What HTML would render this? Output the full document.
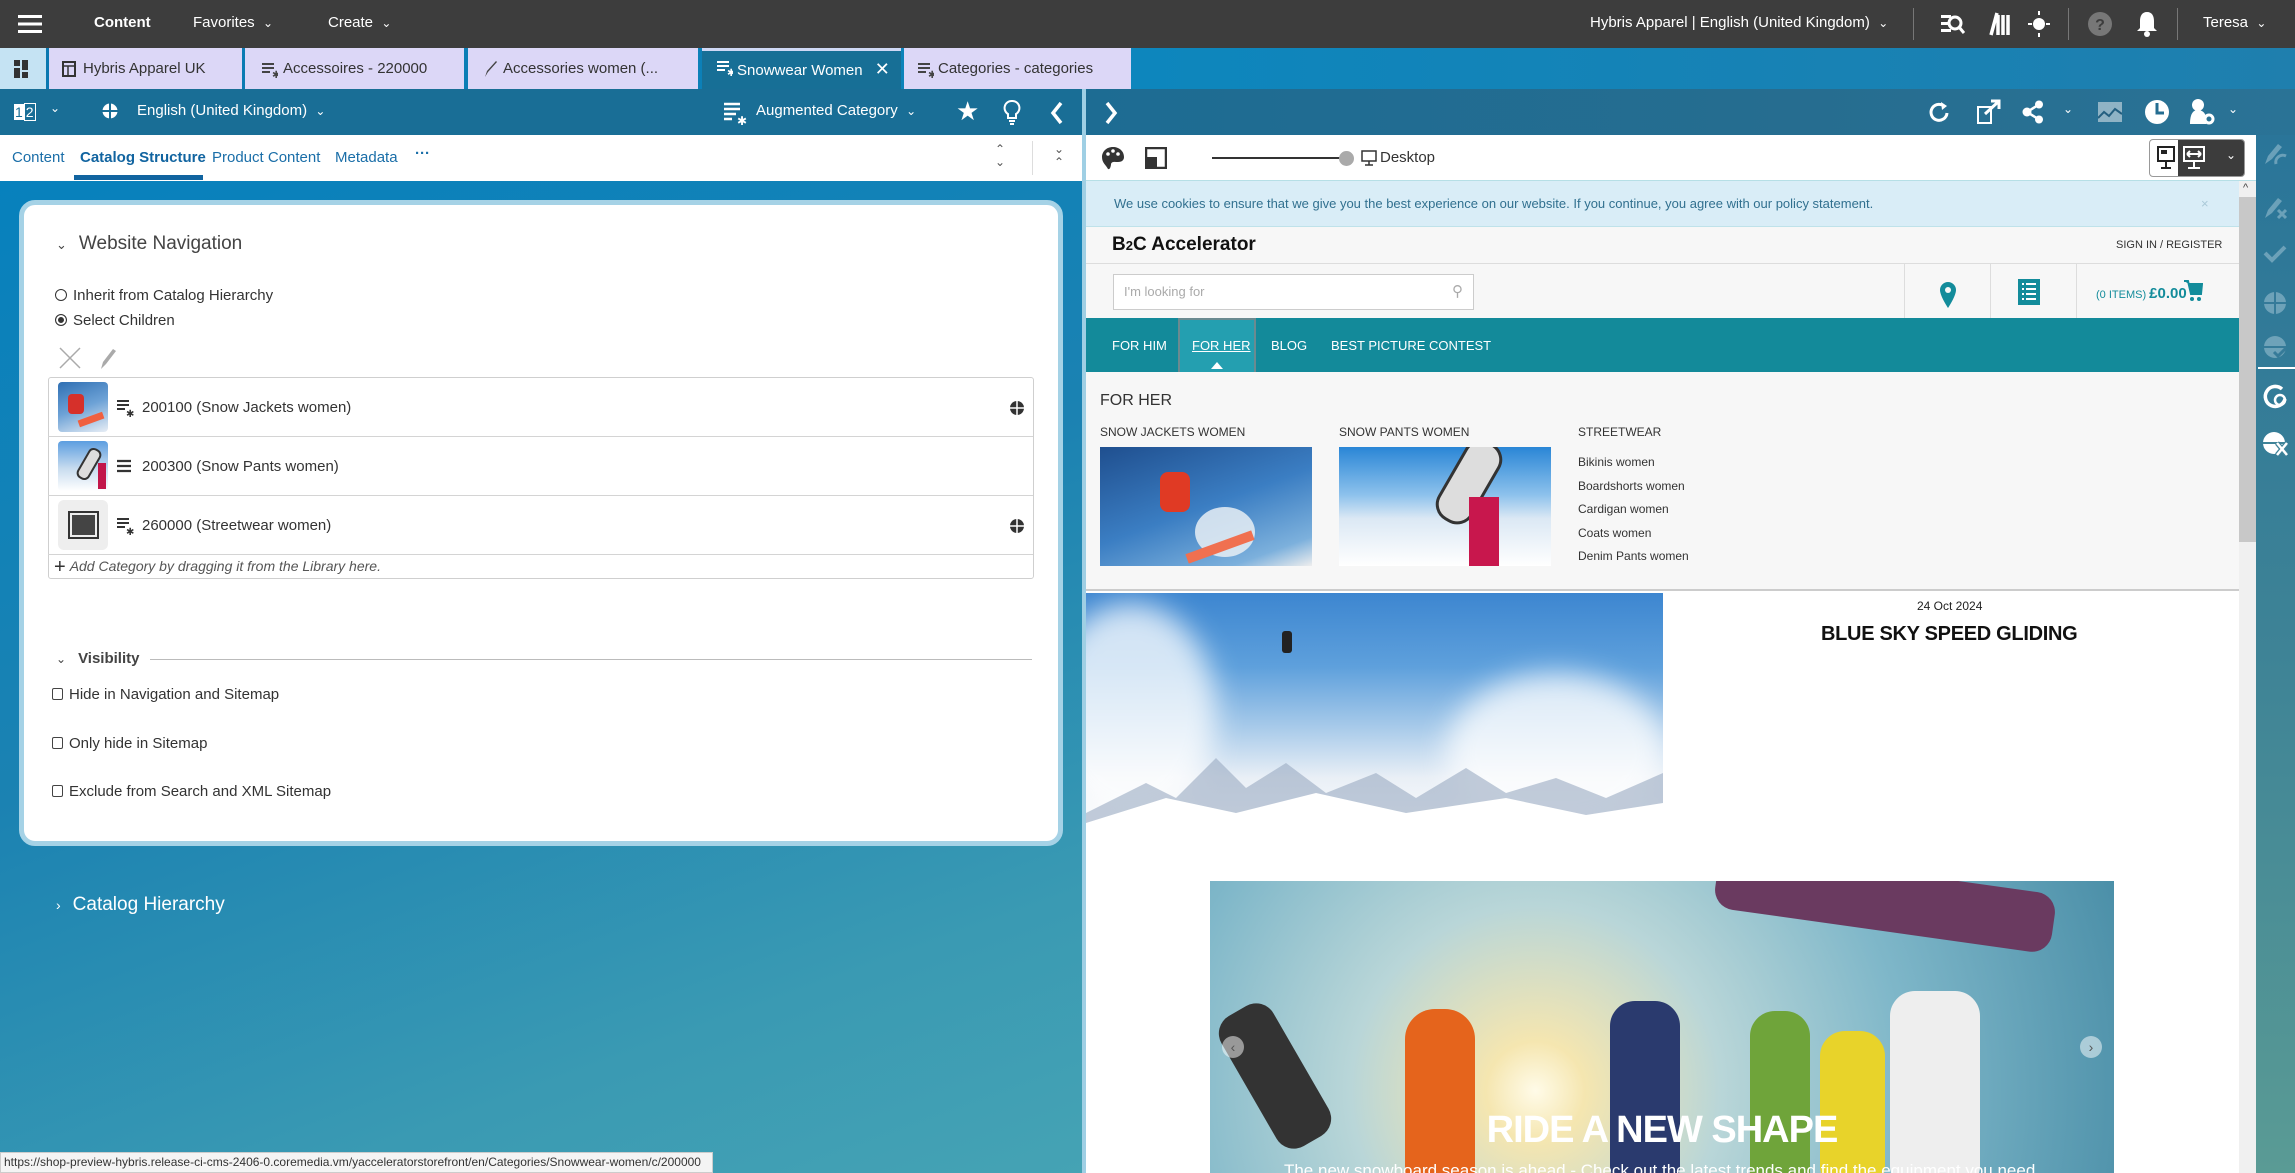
<!DOCTYPE html>
<html><head><meta charset="utf-8">
<style>
*{box-sizing:border-box;margin:0;padding:0}
body{width:2295px;height:1173px;overflow:hidden;position:relative;font-family:"Liberation Sans",sans-serif;background:#1a7fb0}
.a{position:absolute}
.w{color:#fff}
.top{left:0;top:0;width:2295px;height:48px;background:#3d3d3d;color:#fff;font-size:15px}
.tabs{left:0;top:48px;width:2295px;height:41px;background:linear-gradient(90deg,#0a78b0,#0d86bd 50%,#1f7fae)}
.tab{top:48px;height:41px;background:#dcd7f7;color:#333;font-size:15px;line-height:41px;padding-left:20px;white-space:nowrap}
.lt{left:0;top:89px;width:1082px;height:46px;background:#196e96;color:#fff;font-size:15px}
.rt{left:1086px;top:89px;width:1209px;height:46px;background:linear-gradient(90deg,#1d6c93,#266d90 60%,#2a7396)}
.ltab{left:0;top:135px;width:1082px;height:46px;background:#fff;font-size:15px;color:#1a6ea8}
.lbody{left:0;top:181px;width:1082px;height:992px;background:linear-gradient(160deg,#0781bd 0%,#1b82b2 45%,#3a9ab3 80%,#45a3b4 100%)}
.card{left:19px;top:200px;width:1044px;height:646px;background:#fff;border:5px solid #a5d2e6;border-radius:16px;color:#333;font-size:15px}
.row{left:48px;width:985px;height:59px;border-bottom:1px solid #d4d4d4;font-size:15px;color:#333}
.chk{display:inline-block;width:11px;height:12px;border:1px solid #444;border-radius:2px;vertical-align:-1px;margin-right:6px}
.pv{left:1086px;top:181px;width:1153px;height:992px;background:#fff;overflow:hidden;font-family:"Liberation Sans",sans-serif}
.side{left:2256px;top:135px;width:39px;height:1038px;background:linear-gradient(180deg,#2a7599,#3e8396 50%,#5a9b95)}
</style></head><body>

<div class="a top">
  <svg class="a" style="left:18px;top:14px" width="26" height="20"><rect y="1" width="24" height="3" fill="#fff"/><rect y="8.5" width="24" height="3" fill="#fff"/><rect y="16" width="24" height="3" fill="#fff"/></svg>
  <div class="a" style="left:94px;top:14px;font-weight:bold">Content</div>
  <div class="a" style="left:193px;top:14px">Favorites &nbsp;<span style="font-size:12px">&#8964;</span></div>
  <div class="a" style="left:328px;top:14px">Create &nbsp;<span style="font-size:12px">&#8964;</span></div>
  <div class="a" style="left:1590px;top:14px">Hybris Apparel | English (United Kingdom) &nbsp;<span style="font-size:12px">&#8964;</span></div>
  <div class="a" style="left:1913px;top:8px;width:1px;height:32px;background:#777"></div>
  <svg class="a" style="left:1941px;top:13px" width="24" height="22"><rect x="0" y="2" width="10" height="3" fill="#fff"/><rect x="0" y="9" width="8" height="3" fill="#fff"/><rect x="0" y="16" width="10" height="3" fill="#fff"/><circle cx="14" cy="10" r="6" fill="none" stroke="#fff" stroke-width="3"/><path d="M18 14l5 6" stroke="#fff" stroke-width="3"/></svg>
  <svg class="a" style="left:1989px;top:12px" width="22" height="24"><path d="M2 23L8 1M9 23V3M14 23V3M19 23V3" stroke="#fff" stroke-width="3.5"/></svg>
  <svg class="a" style="left:2027px;top:10px" width="24" height="28"><circle cx="12" cy="14" r="6" fill="#fff"/><path d="M12 1v4M12 23v4M1 14h4M19 14h4" stroke="#fff" stroke-width="2"/></svg>
  <div class="a" style="left:2068px;top:8px;width:1px;height:32px;background:#777"></div>
  <svg class="a" style="left:2087px;top:11px" width="26" height="26"><circle cx="13" cy="13" r="12" fill="#777"/><text x="13" y="19" fill="#3d3d3d" font-size="16" font-weight="bold" text-anchor="middle" font-family="Liberation Sans">?</text></svg>
  <svg class="a" style="left:2136px;top:10px" width="22" height="28"><path d="M11 2c-5 0-7 4-7 9v7l-3 3h20l-3-3v-7c0-5-2-9-7-9z" fill="#fff"/><circle cx="11" cy="24" r="3" fill="#fff"/></svg>
  <div class="a" style="left:2177px;top:8px;width:1px;height:32px;background:#777"></div>
  <div class="a" style="left:2203px;top:14px">Teresa &nbsp;<span style="font-size:12px">&#8964;</span></div>
</div>

<div class="a tabs"></div>
<div class="a" style="left:0;top:48px;width:46px;height:41px;background:#c5e3f3"></div>
<svg class="a" style="left:14px;top:60px" width="16" height="18"><rect x="0" y="0" width="6" height="6" fill="#333"/><rect x="0" y="8" width="6" height="10" fill="#333"/><rect x="8" y="0" width="6" height="10" fill="#333"/><rect x="8" y="12" width="6" height="6" fill="#333"/></svg>
<div class="a tab" style="left:49px;width:193px;padding-left:34px">Hybris Apparel UK</div>
<svg class="a" style="left:62px;top:61px" width="14" height="16"><rect x="1" y="1" width="12" height="14" fill="none" stroke="#333" stroke-width="2"/><path d="M1 5h12M6 5v10" stroke="#333" stroke-width="1.5"/></svg>
<div class="a tab" style="left:245px;width:219px;padding-left:38px">Accessoires - 220000</div>
<div class="a tab" style="left:468px;width:230px;padding-left:35px">Accessories women (...</div>
<div class="a tab" style="left:702px;width:199px;background:#176f96;color:#fff;border-top:3px solid #cfd8f5;line-height:36px;padding-left:35px">Snowwear Women <span style="font-size:18px;margin-left:8px">✕</span></div>
<div class="a tab" style="left:904px;width:227px;padding-left:34px">Categories - categories</div>
<svg class="a" style="left:262px;top:62px" width="16" height="16"><path d="M0 2h12M0 6h12M0 10h8" stroke="#444" stroke-width="2"/><text x="10" y="16" font-size="10" fill="#444">✱</text></svg>
<svg class="a" style="left:483px;top:60px" width="14" height="18"><path d="M2 17l2-6 9-10 1 1-9 10z" fill="#444"/></svg>
<svg class="a" style="left:717px;top:60px" width="16" height="16"><path d="M0 2h12M0 6h12M0 10h8" stroke="#fff" stroke-width="2"/><text x="10" y="16" font-size="10" fill="#fff">✱</text></svg>
<svg class="a" style="left:918px;top:62px" width="16" height="16"><path d="M0 2h12M0 6h12M0 10h8" stroke="#444" stroke-width="2"/><text x="10" y="16" font-size="10" fill="#444">✱</text></svg>

<div class="a lt">
  <div class="a" style="left:14px;top:14px;width:24px;height:18px;font-size:14px;line-height:18px"><span style="background:#fff;color:#196e96;padding:0 1px">1</span><span style="border:1px solid #fff;padding:0 1px">2</span></div>
  <div class="a" style="left:50px;top:12px;font-size:12px">&#8964;</div>
  <svg class="a" style="left:102px;top:14px" width="16" height="16"><circle cx="8" cy="8" r="7.5" fill="#fff"/><path d="M0 8h16M8 0v16" stroke="#196e96" stroke-width="2"/></svg>
  <div class="a" style="left:137px;top:13px">English (United Kingdom) &nbsp;<span style="font-size:12px">&#8964;</span></div>
  <svg class="a" style="left:724px;top:12px" width="24" height="24"><path d="M0 3h16M0 8h16M0 13h12M0 18h8" stroke="#fff" stroke-width="2.5"/><text x="13" y="24" font-size="12" fill="#fff">✱</text></svg>
  <div class="a" style="left:756px;top:13px">Augmented Category &nbsp;<span style="font-size:12px">&#8964;</span></div>
  <div class="a" style="left:956px;top:7px;font-size:26px">★</div>
  <svg class="a" style="left:1003px;top:11px" width="18" height="26"><path d="M9 1a7 7 0 0 0-4 13v4h8v-4a7 7 0 0 0-4-13z" fill="none" stroke="#fff" stroke-width="2"/><path d="M6 21h6M7 24h4" stroke="#fff" stroke-width="2"/></svg>
  <svg class="a" style="left:1050px;top:12px" width="14" height="24"><path d="M11 2L3 12l8 10" fill="none" stroke="#fff" stroke-width="3.5"/></svg>
</div>
<div class="a" style="left:1082px;top:89px;width:4px;height:1084px;background:#9fcfe4"></div>

<div class="a ltab">
  <div class="a" style="left:12px;top:14px">Content</div>
  <div class="a" style="left:80px;top:14px;font-weight:bold;color:#1164a0">Catalog Structure</div>
  <div class="a" style="left:74px;top:40px;width:129px;height:5px;background:#1164a0"></div>
  <div class="a" style="left:212px;top:14px">Product Content</div>
  <div class="a" style="left:335px;top:14px">Metadata</div>
  <div class="a" style="left:415px;top:10px;font-weight:bold">···</div>
  <div class="a" style="left:995px;top:8px;color:#555;font-size:12px;line-height:13px">&#8963;<br>&#8964;</div>
  <div class="a" style="left:1032px;top:6px;width:1px;height:34px;background:#ddd"></div>
  <div class="a" style="left:1054px;top:8px;color:#555;font-size:12px;line-height:13px">&#8964;<br>&#8963;</div>
</div>

<div class="a lbody"></div>
<div class="a card">
  <div class="a" style="left:32px;top:28px;font-size:19px;color:#444"><span style="font-size:13px;margin-right:12px">&#8964;</span>Website Navigation</div>
  <div class="a" style="left:31px;top:82px;font-size:15px"><span style="display:inline-block;width:12px;height:12px;border:1px solid #333;border-radius:50%;vertical-align:-1px;margin-right:6px"></span>Inherit from Catalog Hierarchy</div>
  <div class="a" style="left:31px;top:107px;font-size:15px"><span style="display:inline-block;width:12px;height:12px;border:1px solid #333;border-radius:50%;vertical-align:-1px;margin-right:6px;box-shadow:inset 0 0 0 2px #fff;background:#333"></span>Select Children</div>
  <svg class="a" style="left:33px;top:140px" width="60" height="26"><path d="M3 3l20 20M23 3L3 23" stroke="#aaa" stroke-width="1.5"/><path d="M44 24l2-7 10-13 3 2-10 13z" fill="#aaa"/></svg>
</div>
<div class="a" style="left:48px;top:377px;width:986px;height:202px;border:1px solid #cfcfcf;border-radius:3px;background:#fff"></div>
<div class="a row" style="top:378px">
  <div class="a" style="left:10px;top:4px;width:50px;height:50px;border-radius:4px;background:linear-gradient(160deg,#2f6fb3,#6da2d6 50%,#e8eef5);overflow:hidden"><div class="a" style="left:10px;top:12px;width:16px;height:20px;background:#d6302a;border-radius:4px"></div><div class="a" style="left:20px;top:34px;width:26px;height:7px;background:#f06040;transform:rotate(-20deg)"></div></div>
  <svg class="a" style="left:69px;top:21px" width="18" height="18"><path d="M0 2h12M0 6h12M0 10h8" stroke="#333" stroke-width="2"/><text x="9" y="18" font-size="10" fill="#333">✱</text></svg>
  <div class="a" style="left:94px;top:21px">200100 (Snow Jackets women)</div>
  <svg class="a" style="left:961px;top:22px" width="16" height="16"><circle cx="8" cy="8" r="7" fill="#333"/><path d="M0 8h16" stroke="#fff" stroke-width="1.5"/><path d="M8 0v16" stroke="#fff" stroke-width="1.5"/></svg>
</div>
<div class="a row" style="top:437px">
  <div class="a" style="left:10px;top:4px;width:50px;height:50px;border-radius:4px;background:linear-gradient(180deg,#5c9ee0,#c8dcef 55%,#fff);overflow:hidden"><div class="a" style="left:24px;top:6px;width:14px;height:34px;background:#ddd;transform:rotate(30deg);border:2px solid #333;border-radius:6px"></div><div class="a" style="left:40px;top:22px;width:8px;height:26px;background:#c2164a"></div></div>
  <svg class="a" style="left:69px;top:22px" width="18" height="16"><path d="M0 2h14M0 7h14M0 12h14" stroke="#333" stroke-width="2.2"/></svg>
  <div class="a" style="left:94px;top:21px">200300 (Snow Pants women)</div>
</div>
<div class="a row" style="top:496px">
  <div class="a" style="left:10px;top:4px;width:50px;height:50px;border-radius:6px;background:#eee"></div>
  <div class="a" style="left:20px;top:15px;width:31px;height:28px;border:2px solid #333;background:#444;box-shadow:inset 0 0 0 2px #eee"></div>
  <svg class="a" style="left:69px;top:21px" width="18" height="18"><path d="M0 2h12M0 6h12M0 10h8" stroke="#333" stroke-width="2"/><text x="9" y="18" font-size="10" fill="#333">✱</text></svg>
  <div class="a" style="left:94px;top:21px">260000 (Streetwear women)</div>
  <svg class="a" style="left:961px;top:22px" width="16" height="16"><circle cx="8" cy="8" r="7" fill="#333"/><path d="M0 8h16" stroke="#fff" stroke-width="1.5"/><path d="M8 0v16" stroke="#fff" stroke-width="1.5"/></svg>
</div>
<div class="a" style="left:54px;top:556px;font-size:14px;color:#555;font-style:italic"><span style="font-style:normal;font-size:20px;color:#333;vertical-align:-2px;margin-right:4px">+</span>Add Category by dragging it from the Library here.</div>

<div class="a" style="left:56px;top:650px;font-size:15px;font-weight:bold;color:#444"><span style="font-size:12px;font-weight:normal;margin-right:12px">&#8964;</span>Visibility</div>
<div class="a" style="left:150px;top:659px;width:882px;height:1px;background:#bbb"></div>
<div class="a" style="left:52px;top:686px;font-size:15px;color:#333"><span class="chk"></span>Hide in Navigation and Sitemap</div>
<div class="a" style="left:52px;top:735px;font-size:15px;color:#333"><span class="chk"></span>Only hide in Sitemap</div>
<div class="a" style="left:52px;top:783px;font-size:15px;color:#333"><span class="chk"></span>Exclude from Search and XML Sitemap</div>

<div class="a w" style="left:56px;top:894px;font-size:19px"><span style="font-size:14px;margin-right:12px">›</span>Catalog Hierarchy</div>

<div class="a" style="left:0;top:1152px;width:713px;height:21px;background:#f4f4f4;border:1px solid #ccc;font-size:12px;color:#333;line-height:19px;padding-left:3px;white-space:nowrap;overflow:hidden">https://shop-preview-hybris.release-ci-cms-2406-0.coremedia.vm/yacceleratorstorefront/en/Categories/Snowwear-women/c/200000</div>

<div class="a rt">
  <svg class="a" style="left:18px;top:12px" width="14" height="24"><path d="M3 2l8 10-8 10" fill="none" stroke="#fff" stroke-width="3.5"/></svg>
  <svg class="a" style="left:842px;top:11px" width="22" height="24"><path d="M17 7a8 8 0 1 0 2 6" fill="none" stroke="#fff" stroke-width="3"/><path d="M13 2l6 4-5 4z" fill="#fff"/></svg>
  <svg class="a" style="left:891px;top:10px" width="24" height="26"><rect x="1" y="8" width="13" height="16" fill="none" stroke="#fff" stroke-width="2"/><path d="M8 15L21 3M14 2h8v8" stroke="#fff" stroke-width="3" fill="none"/></svg>
  <svg class="a" style="left:935px;top:11px" width="24" height="24"><circle cx="6" cy="12" r="4.5" fill="#fff"/><circle cx="18" cy="4.5" r="4" fill="#fff"/><circle cx="18" cy="19.5" r="4" fill="#fff"/><path d="M6 12L18 4.5M6 12l12 7.5" stroke="#fff" stroke-width="2.5"/></svg>
  <div class="a w" style="left:977px;top:13px;font-size:12px">&#8964;</div>
  <svg class="a" style="left:1012px;top:13px" width="24" height="20"><rect width="24" height="20" fill="#8fb3c5"/><path d="M0 16l6-6 5 4 6-7 7 5" stroke="#245f80" stroke-width="2" fill="none"/></svg>
  <svg class="a" style="left:1058px;top:10px" width="26" height="26"><circle cx="13" cy="13" r="12" fill="#fff"/><path d="M13 4v10h7" stroke="#246d91" stroke-width="3" fill="none"/></svg>
  <svg class="a" style="left:1103px;top:9px" width="26" height="28"><circle cx="9" cy="7" r="6" fill="#fff"/><path d="M1 26c0-10 3-14 8-14s8 4 8 8v6z" fill="#fff"/><circle cx="20" cy="21" r="4" fill="none" stroke="#fff" stroke-width="3"/></svg>
  <div class="a w" style="left:1142px;top:13px;font-size:12px">&#8964;</div>
</div>

<div class="a" style="left:1086px;top:135px;width:1170px;height:46px;background:#fff;border-bottom:1px solid #b6dfe6"></div>
<svg class="a" style="left:1101px;top:146px" width="24" height="24"><path d="M12 1C5 1 1 6 1 11c0 6 4 8 6 12 2 1 3-3 3-5 1-3 4-2 7-2 4 0 6-2 6-5 0-6-5-10-11-10z" fill="#333"/><circle cx="7" cy="8" r="1.8" fill="#fff"/><circle cx="12" cy="5" r="1.8" fill="#fff"/><circle cx="17" cy="8" r="1.8" fill="#fff"/></svg>
<svg class="a" style="left:1145px;top:147px" width="22" height="22"><rect x="1" y="1" width="20" height="20" fill="none" stroke="#333" stroke-width="2.5"/><rect x="1" y="10" width="11" height="11" fill="#333"/></svg>
<div class="a" style="left:1212px;top:157px;width:133px;height:2px;background:#333"></div>
<div class="a" style="left:1339px;top:151px;width:15px;height:15px;border-radius:50%;background:#aaa"></div>
<svg class="a" style="left:1361px;top:150px" width="16" height="16"><rect x="1" y="1" width="14" height="10" fill="none" stroke="#333" stroke-width="1.5"/><path d="M8 11v4M4 15h8" stroke="#333" stroke-width="1.5"/></svg>
<div class="a" style="left:1380px;top:149px;font-size:15px;color:#333">Desktop</div>
<div class="a" style="left:2149px;top:139px;width:96px;height:38px;border:1px solid #999;border-radius:4px;background:#fff;overflow:hidden"><div class="a" style="left:28px;top:0;width:68px;height:38px;background:#3c3c3c"></div></div>
<svg class="a" style="left:2156px;top:146px" width="20" height="24"><rect x="2" y="1" width="16" height="14" fill="none" stroke="#222" stroke-width="2"/><rect x="5" y="4" width="6" height="4" fill="#222"/><path d="M10 15v6M5 22h10" stroke="#222" stroke-width="2"/></svg>
<svg class="a" style="left:2183px;top:146px" width="22" height="24"><rect x="1" y="1" width="20" height="14" fill="none" stroke="#fff" stroke-width="2"/><path d="M4 8h14M4 8l3-3M4 8l3 3M18 8l-3-3M18 8l-3 3" stroke="#fff" stroke-width="2"/><path d="M11 15v6M5 22h12" stroke="#fff" stroke-width="2"/></svg>
<div class="a" style="left:2226px;top:148px;font-size:12px;color:#fff">&#8964;</div>

<div class="a pv">
  <div class="a" style="left:0;top:0;width:1153px;height:46px;background:#d9edf7;border-bottom:1px solid #bfe2ea;color:#31708f;font-size:13px;line-height:46px;padding-left:28px">We use cookies to ensure that we give you the best experience on our website. If you continue, you agree with our policy statement.<span class="a" style="left:1115px;top:0;color:#aac9d8">×</span></div>
  <div class="a" style="left:0;top:46px;width:1153px;height:37px;background:#f7f7f7;border-bottom:1px solid #ddd"></div>
  <div class="a" style="left:26px;top:53px;font-size:19px;font-weight:bold;color:#111">B<span style="font-size:13px">2</span>C Accelerator</div>
  <div class="a" style="left:1030px;top:58px;font-size:11px;color:#333">SIGN IN / REGISTER</div>
  <div class="a" style="left:0;top:83px;width:1153px;height:54px;background:#f7f7f7"></div>
  <div class="a" style="left:27px;top:93px;width:361px;height:36px;background:#fff;border:1px solid #ccc;font-size:13px;color:#aaa;line-height:34px;padding-left:10px">I'm looking for<span class="a" style="left:338px;top:0;font-size:15px">⚲</span></div>
  <div class="a" style="left:818px;top:83px;width:1px;height:54px;background:#ddd"></div>
  <div class="a" style="left:904px;top:83px;width:1px;height:54px;background:#ddd"></div>
  <div class="a" style="left:990px;top:83px;width:1px;height:54px;background:#ddd"></div>
  <svg class="a" style="left:852px;top:100px" width="20" height="28"><path d="M10 1a8 8 0 0 0-8 8c0 6 8 18 8 18s8-12 8-18a8 8 0 0 0-8-8z" fill="#138c9b"/><circle cx="10" cy="9" r="3" fill="#f7f7f7"/></svg>
  <svg class="a" style="left:931px;top:97px" width="24" height="28"><rect x="1" y="1" width="22" height="26" fill="#138c9b"/><path d="M5 6h2M9 6h10M5 11h2M9 11h10M5 16h2M9 16h10M5 21h2M9 21h10" stroke="#fff" stroke-width="2"/></svg>
  <div class="a" style="left:1010px;top:104px;color:#138c9b;font-size:11px">(0 ITEMS) <span style="font-size:15px;font-weight:bold">£0.00</span></div>
  <svg class="a" style="left:1097px;top:98px" width="20" height="24"><path d="M1 2h4l3 13h10l1-10H6" fill="#138c9b" stroke="#138c9b" stroke-width="2"/><circle cx="9" cy="20" r="2" fill="#138c9b"/><circle cx="16" cy="20" r="2" fill="#138c9b"/></svg>
  <div class="a" style="left:0;top:137px;width:1153px;height:54px;background:#138a9a"></div>
  <div class="a" style="left:92px;top:137px;width:78px;height:54px;background:#249fb0;border:2px solid #6b8a90;border-bottom:none"></div>
  <div class="a" style="left:26px;top:157px;color:#fff;font-size:13px">FOR HIM</div>
  <div class="a" style="left:106px;top:157px;color:#fff;font-size:13px;text-decoration:underline">FOR HER</div>
  <div class="a" style="left:125px;top:181px;width:0;height:0;border-left:6px solid transparent;border-right:6px solid transparent;border-bottom:7px solid #fff"></div>
  <div class="a" style="left:185px;top:157px;color:#fff;font-size:13px">BLOG</div>
  <div class="a" style="left:245px;top:157px;color:#fff;font-size:13px">BEST PICTURE CONTEST</div>
  <div class="a" style="left:0;top:191px;width:1153px;height:219px;background:#f7f7f7;border-bottom:2px solid #ccc"></div>
  <div class="a" style="left:14px;top:211px;font-size:16px;color:#333">FOR HER</div>
  <div class="a" style="left:14px;top:244px;font-size:12px;color:#333">SNOW JACKETS WOMEN</div>
  <div class="a" style="left:253px;top:244px;font-size:12px;color:#333">SNOW PANTS WOMEN</div>
  <div class="a" style="left:492px;top:244px;font-size:12px;color:#333">STREETWEAR</div>
  <div class="a" style="left:14px;top:266px;width:212px;height:119px;background:linear-gradient(160deg,#1f4f8f,#3b7ec3 50%,#7cb0dc 85%,#eee);overflow:hidden"><div class="a" style="left:60px;top:25px;width:30px;height:40px;background:#e03a24;border-radius:8px"></div><div class="a" style="left:95px;top:60px;width:60px;height:50px;background:#e8eef4;border-radius:50%;opacity:.85"></div><div class="a" style="left:85px;top:95px;width:70px;height:10px;background:#f07050;transform:rotate(-20deg)"></div></div>
  <div class="a" style="left:253px;top:266px;width:212px;height:119px;background:linear-gradient(180deg,#2a86d6,#8cc1ec 40%,#dbe8f4 60%,#fff);overflow:hidden"><div class="a" style="left:110px;top:-10px;width:40px;height:90px;background:#ddd;border:3px solid #333;border-radius:18px;transform:rotate(30deg)"></div><div class="a" style="left:130px;top:50px;width:30px;height:70px;background:#c8174d"></div></div>
  <div class="a" style="left:492px;top:270px;font-size:12px;color:#333;line-height:23.5px">Bikinis women<br>Boardshorts women<br>Cardigan women<br>Coats women<br>Denim Pants women</div>
  <div class="a" style="left:0;top:412px;width:577px;height:246px;background:linear-gradient(180deg,#3d86d0 0%,#5ea0dc 30%,#a9cbea 55%,#e9eff6 75%,#fff 100%);overflow:hidden">
    <div class="a" style="left:-40px;top:10px;width:170px;height:220px;background:#fff;border-radius:50%;opacity:.75;filter:blur(14px)"></div>
    <div class="a" style="left:360px;top:80px;width:220px;height:160px;background:#fff;border-radius:50%;opacity:.75;filter:blur(14px)"></div>
    <div class="a" style="left:196px;top:38px;width:10px;height:22px;background:#222;border-radius:3px"></div>
    <svg class="a" style="left:0;top:150px" width="577" height="96"><path d="M0 70L60 40 90 55 130 15 160 45 200 20 240 50 290 30 330 55 380 25 420 50 470 35 520 55 577 30V96H0z" fill="#9aaac2" opacity=".6"/><path d="M0 80L80 55 150 70 230 50 320 70 420 55 500 72 577 60V96H0z" fill="#fff"/></svg>
  </div>
  <div class="a" style="left:831px;top:418px;font-size:12px;color:#222">24 Oct 2024</div>
  <div class="a" style="left:735px;top:442px;font-size:20px;color:#111;font-weight:bold;letter-spacing:-.3px">BLUE SKY SPEED GLIDING</div>
  <div class="a" style="left:124px;top:700px;width:904px;height:300px;background:radial-gradient(circle at 36% 70%,#fffbe8 0%,#f5e6b0 8%,#b9d6d8 30%,#7fb7c9 60%,#4b8fa8 100%);overflow:hidden">
    <div class="a" style="left:505px;top:-10px;width:340px;height:60px;background:#6a3a60;transform:rotate(8deg);border-radius:20px"></div>
    <div class="a" style="left:195px;top:128px;width:70px;height:190px;background:#e5641c;border-radius:30px"></div>
    <div class="a" style="left:35px;top:120px;width:60px;height:150px;background:#333;border-radius:20px;transform:rotate(-30deg)"></div>
    <div class="a" style="left:400px;top:120px;width:70px;height:190px;background:#2a3a6e;border-radius:25px"></div>
    <div class="a" style="left:540px;top:130px;width:60px;height:190px;background:#6fa43a;border-radius:25px"></div>
    <div class="a" style="left:610px;top:150px;width:65px;height:160px;background:#e8d32a;border-radius:25px"></div>
    <div class="a" style="left:680px;top:110px;width:90px;height:200px;background:#eeeeee;border-radius:25px"></div>
    <div class="a" style="left:0;top:228px;width:904px;text-align:center;color:#fff;font-size:38px;font-weight:bold;letter-spacing:-1px">RIDE A NEW SHAPE</div>
    <div class="a" style="left:0;top:280px;width:904px;text-align:center;color:#fff;font-size:17px">The new snowboard season is ahead - Check out the latest trends and find the equipment you need.</div>
    <div class="a" style="left:12px;top:155px;width:22px;height:22px;border-radius:50%;background:rgba(255,255,255,.5);color:#555;font-size:14px;text-align:center;line-height:22px">‹</div>
    <div class="a" style="left:870px;top:155px;width:22px;height:22px;border-radius:50%;background:rgba(255,255,255,.5);color:#555;font-size:14px;text-align:center;line-height:22px">›</div>
  </div>
</div>
<div class="a" style="left:2239px;top:181px;width:17px;height:992px;background:#f0f0f0"></div>
<div class="a" style="left:2239px;top:197px;width:17px;height:345px;background:#c8c8c8"></div>
<div class="a" style="left:2243px;top:182px;font-size:11px;color:#444">^</div>

<div class="a side"></div>
<svg class="a" style="left:2262px;top:140px" width="28" height="340" opacity=".55">
 <path d="M3 24l3-8 10-12 4 3-10 12z" fill="#9fc4d4"/><path d="M14 24a7 7 0 0 1 10-8" stroke="#9fc4d4" stroke-width="3" fill="none"/>
 <path d="M3 78l3-8 10-12 4 3-10 12z" fill="#9fc4d4"/><path d="M16 70l8 8M24 70l-8 8" stroke="#9fc4d4" stroke-width="3"/>
 <path d="M3 113l7 7 13-13" stroke="#9fc4d4" stroke-width="4" fill="none"/>
 <circle cx="13" cy="163" r="11" fill="#9fc4d4"/><path d="M2 163h22M13 152v22" stroke="#3a7c9a" stroke-width="2"/>
 <circle cx="13" cy="207" r="11" fill="#9fc4d4"/><path d="M2 207h22" stroke="#3a7c9a" stroke-width="2"/><path d="M12 212l4 4 8-8" stroke="#3a7c9a" stroke-width="3" fill="none"/>
</svg>
<div class="a" style="left:2258px;top:367px;width:37px;height:2px;background:#fff"></div>
<svg class="a" style="left:2262px;top:383px" width="28" height="80">
 <path d="M20 6a10 10 0 1 0 3 10" stroke="#fff" stroke-width="3.5" fill="none"/><circle cx="18" cy="17" r="5" fill="none" stroke="#fff" stroke-width="2.5"/>
 <circle cx="12" cy="60" r="11" fill="#fff"/><path d="M1 60h22" stroke="#3f8398" stroke-width="2"/><path d="M15 60l10 12M25 60l-10 12" stroke="#3f8398" stroke-width="5"/><path d="M15 60l10 12M25 60l-10 12" stroke="#fff" stroke-width="2.5"/>
</svg>
</body></html>
